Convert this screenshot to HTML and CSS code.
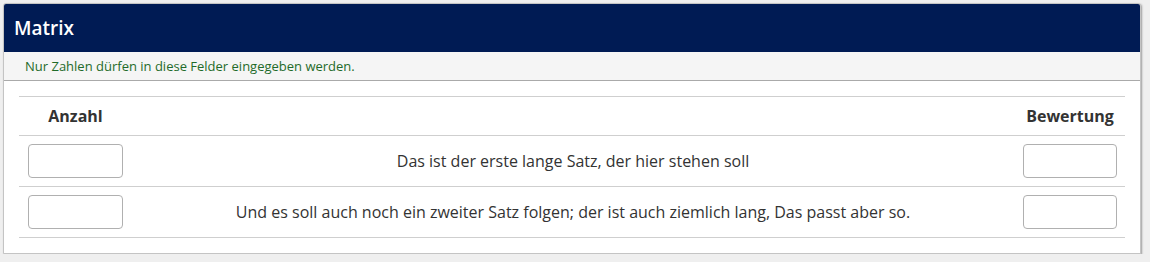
FILE: index.html
```html
<!DOCTYPE html>
<html lang="de">
<head>
  <meta charset="UTF-8">
  <meta name="viewport" content="width=device-width, initial-scale=1.0">
  <title>Matrix</title>
  <link rel="stylesheet" href="styles.css">
</head>
<body>
  <section class="panel">
    <h2 class="panel-title">Matrix</h2>
    <p class="panel-hint">Nur Zahlen dürfen in diese Felder eingegeben werden.</p>
    <div class="panel-body">
      <table class="matrix">
        <thead>
          <tr>
            <th class="col-input">Anzahl</th>
            <th></th>
            <th class="col-input col-last">Bewertung</th>
          </tr>
        </thead>
        <tbody>
          <tr>
            <td class="col-input"><input type="text"></td>
            <td class="statement">Das ist der erste lange Satz, der hier stehen soll</td>
            <td class="col-input col-last"><input type="text"></td>
          </tr>
          <tr>
            <td class="col-input"><input type="text"></td>
            <td class="statement">Und es soll auch noch ein zweiter Satz folgen; der ist auch ziemlich lang, Das passt aber so.</td>
            <td class="col-input col-last"><input type="text"></td>
          </tr>
        </tbody>
      </table>
    </div>
  </section>
</body>
</html>
```

FILE: styles.css
```css
:root {
  --navy: #001b54;
  --page: #efefef;
  --line: #cfcfcf;
  --text: #333;
  --hint: #1f6b2a;
}

body {
  margin: 0;
  padding: 3px 9px 0 3px;
  background-color: var(--page);
  font-family: "Open Sans", "Liberation Sans", sans-serif;
  color: var(--text);
}

.panel {
  background-color: #fff;
  border: 1px solid #c4c4c4;
  border-radius: 3px 3px 0 0;
  box-shadow: 1px 1px 2px rgba(0, 0, 0, 0.35);
}

.panel-title {
  margin: 0;
  height: 48px;
  padding: 0 10px;
  display: flex;
  align-items: center;
  background-color: var(--navy);
  color: #fff;
  font-size: 19px;
  font-weight: 600;
  border-radius: 2px 2px 0 0;
}

.panel-hint {
  margin: 0;
  height: 28px;
  padding: 0 21px;
  display: flex;
  align-items: center;
  background-color: #f5f5f5;
  border-bottom: 1px solid #aaa;
  color: var(--hint);
  font-size: 13px;
}

.panel-body {
  padding: 15px;
}

.matrix {
  width: 100%;
  border-collapse: collapse;
  font-size: 16px;
}

.matrix tr {
  border-top: 1px solid var(--line);
  border-bottom: 1px solid var(--line);
}

.matrix th {
  padding: 8px 9px;
  line-height: 22px;
  font-weight: 700;
  text-align: center;
}

.matrix td {
  padding: 8px 9px;
  text-align: center;
  vertical-align: middle;
}

.col-input {
  width: 95px;
}

.matrix .col-last {
  width: 94px;
  padding-right: 8px;
}

.col-last input {
  width: 94px;
}

.statement {
  line-height: 22px;
}

input {
  display: block;
  box-sizing: border-box;
  width: 95px;
  height: 34px;
  margin: 0;
  border: 1px solid #b0b0b0;
  border-radius: 4px;
  background-color: #fff;
  font: inherit;
}
```
